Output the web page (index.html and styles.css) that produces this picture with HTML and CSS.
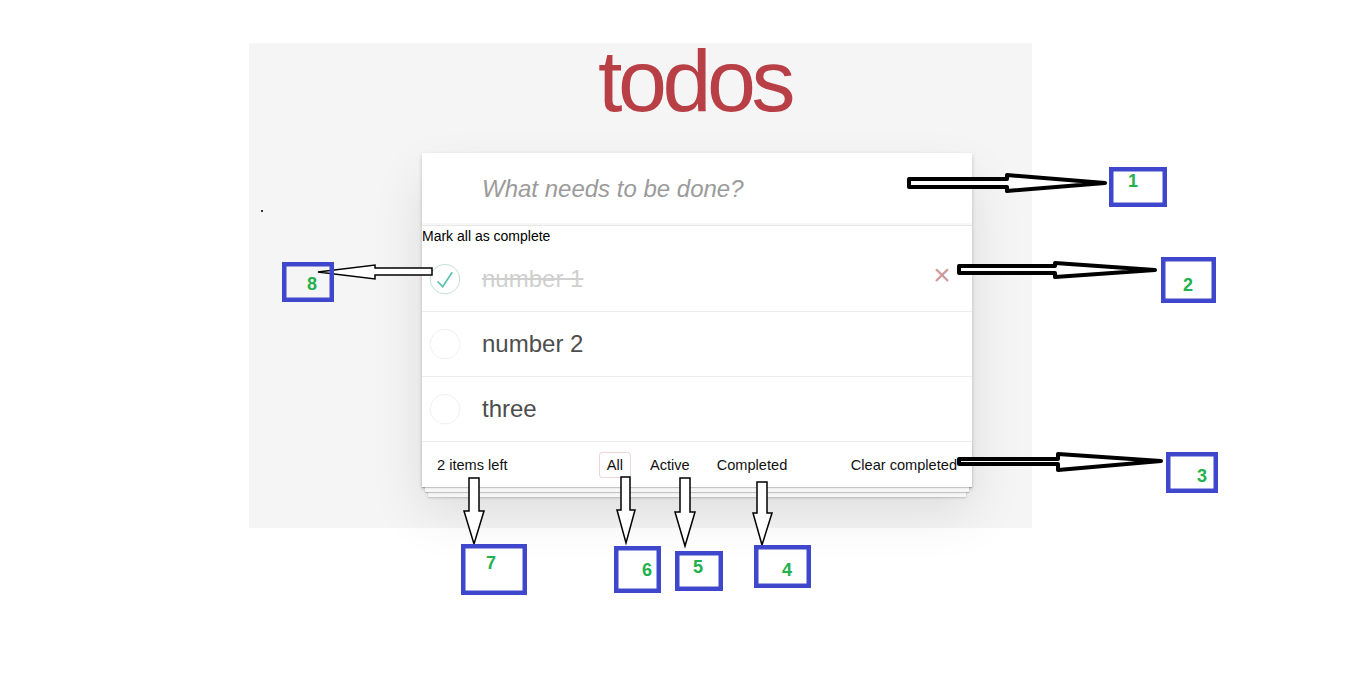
FILE: index.html
```html
<!DOCTYPE html>
<html lang="en">
<head>
<meta charset="utf-8">
<title>todos</title>
<link rel="stylesheet" href="styles.css">
</head>
<body>
<div class="panel">
  <div class="app-wrap">
    <h1 class="title">todos</h1>
    <section class="todoapp">
      <header class="header">
        <input class="new-todo" placeholder="What needs to be done?">
      </header>
      <section class="main">
        <label class="toggle-all-label">Mark all as complete</label>
        <ul class="todo-list">
          <li class="todo completed">
            <svg class="toggle" width="40" height="40" viewBox="-10 -18 100 135"><circle cx="50" cy="50" r="50" fill="none" stroke="#bddad5" stroke-width="3"/><path fill="#5dc2af" d="M72 25L42 71 27 56l-4 4 20 20 34-52z"/></svg>
            <span class="todo-label">number 1</span>
            <span class="destroy">×</span>
          </li>
          <li class="todo">
            <svg class="toggle" width="40" height="40" viewBox="-10 -18 100 135"><circle cx="50" cy="50" r="50" fill="none" stroke="#ededed" stroke-width="3"/></svg>
            <span class="todo-label">number 2</span>
          </li>
          <li class="todo">
            <svg class="toggle" width="40" height="40" viewBox="-10 -18 100 135"><circle cx="50" cy="50" r="50" fill="none" stroke="#ededed" stroke-width="3"/></svg>
            <span class="todo-label">three</span>
          </li>
        </ul>
      </section>
      <footer class="footer">
        <span class="todo-count">2 items left</span>
        <ul class="filters">
          <li><a class="selected">All</a></li>
          <li><a>Active</a></li>
          <li><a>Completed</a></li>
        </ul>
        <button class="clear-completed">Clear completed</button>
      </footer>
    </section>
  </div>
</div>

<svg class="annotations" width="1360" height="698" viewBox="0 0 1360 698">
  <rect x="261" y="210" width="2" height="2" fill="#333"/>
  <g fill="#fff" stroke="#000" stroke-width="4" stroke-linejoin="round">
    <polygon points="909,179 1007,179 1007,175 1105,183 1007,191 1007,187 909,187"/>
    <polygon points="959,266 1055,266 1055,263 1155,270 1055,277 1055,273 959,273"/>
    <polygon points="959,459 1058,459 1058,454 1161,461 1058,470 1058,464 959,464"/>
  </g>
  <g fill="#fff" stroke="#000" stroke-width="1.5">
    <polygon points="432,268 432,275 375,275 375,279 318,272 375,265 375,268"/>
    <polygon points="469,478 479,478 479,511 484,511 474,544 464,511 469,511"/>
    <polygon points="621,477 630,477 630,510 635,510 626,543 617,510 621,510"/>
    <polygon points="680,478 690,478 690,512 695,512 685,546 675,512 680,512"/>
    <polygon points="757,482 767,482 767,513 772,513 762,545 753,513 757,513"/>
  </g>
  <g fill="none" stroke="#3f48cc" stroke-width="4.5">
    <rect x="1111.25" y="169.25" width="53.5" height="35.5"/>
    <rect x="1163.25" y="259.25" width="50.5" height="41.5"/>
    <rect x="1168.25" y="454.25" width="47.5" height="36.5"/>
    <rect x="756.25" y="547.25" width="52.5" height="38.5"/>
    <rect x="677.25" y="553.25" width="43.5" height="35.5"/>
    <rect x="616.25" y="548.25" width="42.5" height="42.5"/>
    <rect x="463.25" y="546.25" width="61.5" height="46.5"/>
    <rect x="284.25" y="264.25" width="47.5" height="35.5"/>
  </g>
  <g class="ann-num" fill="#22b14c" text-anchor="middle">
    <text x="1133" y="187">1</text>
    <text x="1188" y="291">2</text>
    <text x="1202" y="482">3</text>
    <text x="787" y="576">4</text>
    <text x="698" y="573">5</text>
    <text x="647" y="576">6</text>
    <text x="491" y="569">7</text>
    <text x="312" y="290">8</text>
  </g>
</svg>
</body>
</html>
```

FILE: styles.css
```css
* {
  box-sizing: border-box;
}

html,
body {
  margin: 0;
  padding: 0;
}

body {
  position: relative;
  width: 1360px;
  height: 698px;
  overflow: hidden;
  padding: 43px 0 0 249px;
  background: #ffffff;
  color: #000;
  font-family: "Liberation Sans", Arial, sans-serif;
}

.panel {
  width: 783px;
  height: 485px;
  padding-left: 173px;
  background: #f5f5f5;
}

.app-wrap {
  width: 550px;
}

.title {
  margin: 0;
  height: 76px;
  padding-right: 5px;
  line-height: 76px;
  font-size: 88px;
  font-weight: 400;
  letter-spacing: -4.5px;
  text-align: center;
  color: #b83f45;
}

.todoapp {
  margin-top: 34px;
  background: #fff;
  box-shadow: 0 2px 4px 0 rgba(0, 0, 0, 0.2), 0 25px 50px 0 rgba(0, 0, 0, 0.1);
}

.new-todo {
  display: block;
  width: 100%;
  height: 72px;
  margin: 0;
  padding: 0 16px 0 60px;
  border: 0;
  outline: none;
  background: transparent;
  font-family: inherit;
  font-size: 24px;
  color: #4d4d4d;
  box-shadow: inset 0 -2px 1px rgba(0, 0, 0, 0.03);
}

.new-todo::placeholder {
  font-style: italic;
  color: #9b9b9b;
}

.main {
  border-top: 1px solid #e6e6e6;
}

.toggle-all-label {
  display: block;
  font-size: 14px;
  line-height: 21px;
}

.todo-list {
  list-style: none;
  margin: 0;
  padding: 0;
}

.todo {
  display: flex;
  align-items: center;
  height: 65px;
  border-bottom: 1px solid #ededed;
}

.toggle {
  flex: none;
  display: block;
}

.todo-label {
  margin-left: 20px;
  font-size: 24px;
  color: #4d4d4d;
}

.completed .todo-label {
  color: #cfcfcf;
  text-decoration: line-through;
}

.destroy {
  margin-left: auto;
  margin-right: 10px;
  width: 40px;
  height: 40px;
  line-height: 32px;
  text-align: center;
  font-size: 30px;
  color: #cc9a9a;
}

.footer {
  display: grid;
  grid-template-columns: 1fr auto 1fr;
  align-items: center;
  height: 45px;
  padding: 0 15px;
  font-size: 14.6px;
  color: #111;
  box-shadow: 0 1px 1px rgba(0, 0, 0, 0.2), 0 8px 0 -3px #f6f6f6, 0 9px 1px -3px rgba(0, 0, 0, 0.2), 0 16px 0 -6px #f6f6f6, 0 17px 2px -6px rgba(0, 0, 0, 0.2);
}

.filters {
  display: flex;
  gap: 11px;
  list-style: none;
  margin: 0;
  padding: 0;
}

.filters a {
  display: block;
  padding: 3px 7px;
  border: 1px solid transparent;
  border-radius: 3px;
  line-height: 18px;
}

.filters a.selected {
  border-color: rgba(175, 47, 47, 0.2);
}

.clear-completed {
  justify-self: end;
  margin: 0;
  padding: 0;
  border: 0;
  background: none;
  font-family: inherit;
  font-size: 14.6px;
  line-height: 18px;
  color: inherit;
}

.annotations {
  position: absolute;
  top: 0;
  left: 0;
  pointer-events: none;
}

.ann-num {
  font-family: "Liberation Sans", Arial, sans-serif;
  font-weight: 700;
  font-size: 18px;
}
```
